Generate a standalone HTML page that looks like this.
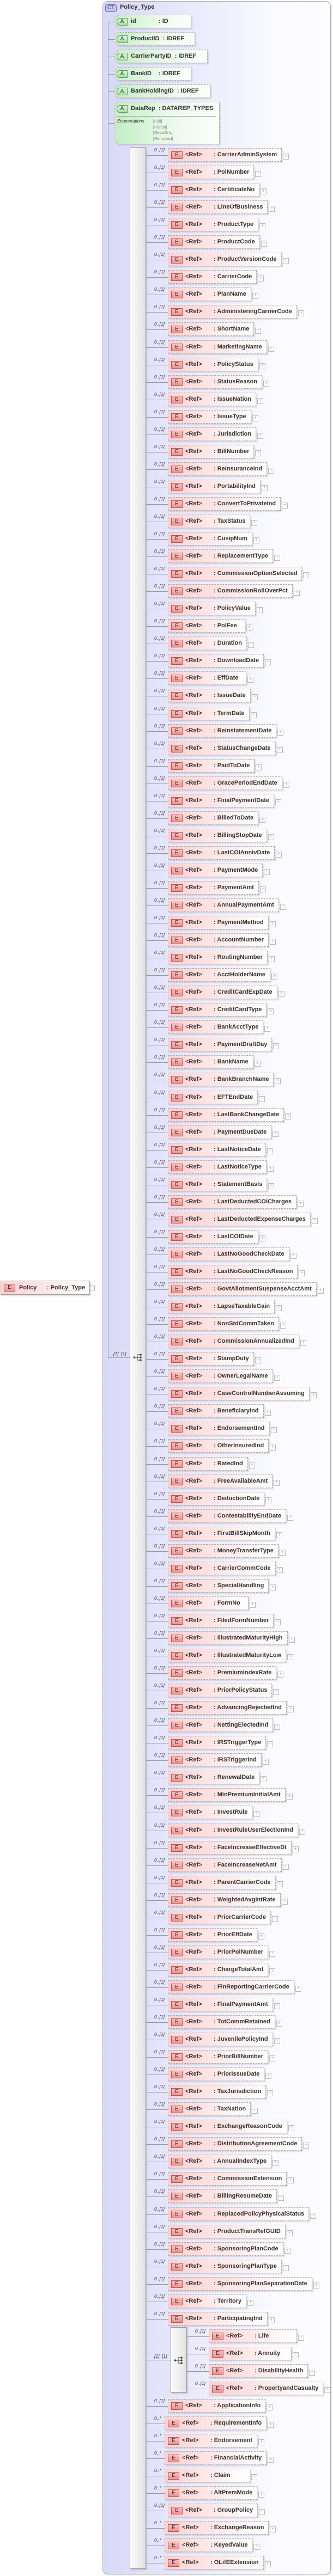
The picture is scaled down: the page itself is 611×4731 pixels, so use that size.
<!DOCTYPE html>
<html><head><meta charset="utf-8">
<style>
*{margin:0;padding:0;box-sizing:border-box}
html,body{width:611px;height:4731px;background:#fff;overflow:hidden;position:relative;font-family:"Liberation Sans",Arial,sans-serif}
.ct{position:absolute;left:188px;top:2px;width:419px;height:4726px;border:1px solid #b0b0b8;border-radius:10px;background:linear-gradient(to right,#d8d8f8 0%,#e8e8fb 35%,#fafaff 75%,#fdfdff 100%);box-shadow:1px 1px 2px rgba(0,0,0,.2)}
.ctb{position:absolute;left:193px;top:8px;width:21px;height:14px;border:1px solid #6a6ab8;border-radius:3px;background:#c8c8f0;font-size:10px;line-height:12px;text-align:center;color:#333}
.ctt{position:absolute;left:220px;top:7px;font-size:11px;font-weight:bold;color:#333}
.vl{position:absolute;background:#999;width:1px}
.hl{position:absolute;background:#999;height:1px}
.a{position:absolute;left:210px;height:25px;border:1px dashed #aaa;border-radius:10px 0 0 10px;background:linear-gradient(to right,#c4eec4,#eefaee 60%,#fafffa);box-shadow:2px 2px 2px rgba(0,0,0,.12);font-size:11px;font-weight:bold;color:#333;line-height:23px;padding-left:29px;white-space:nowrap}
.a .A{position:absolute;left:3px;top:5px;width:20px;height:14px;border:1px solid #5a9a5a;border-radius:6px 0 0 6px;background:linear-gradient(#d8f4d8,#a8dca8);font-size:10px;line-height:12px;text-align:center;font-weight:normal}
.a .nm{display:inline-block;min-width:51px}
.enh{position:absolute;left:3px;right:6px;top:25px;height:1px;background:#999}
.en1{position:absolute;left:4px;top:30px;font-size:8px;font-style:italic;font-weight:normal;line-height:10px;color:#333}
.en2{position:absolute;left:70px;top:30px;font-size:7.5px;font-weight:normal;line-height:10.5px;color:#888}
.seq{position:absolute;left:238px;top:270px;width:30px;height:4448px;border:1px solid #999;background:linear-gradient(to right,#fbfbfb,#e2e2e2);box-shadow:2px 2px 2px rgba(0,0,0,.15)}
.ico{position:absolute;width:18px;height:16px}
.lb{position:absolute;font-size:8.5px;font-style:italic;color:#333;white-space:nowrap}
.list{position:absolute;left:267px;top:272px;width:344px}
.r{position:relative;height:32.05px}
.r::before{content:"";position:absolute;left:0;top:13px;width:41px;height:1px;background:#999}
.m{position:absolute;left:16px;top:-2px;font-size:8.5px;font-style:italic;color:#333}
.b{position:absolute;left:41px;top:0;height:25px;border:1px dashed #aaa;background:linear-gradient(to right,#ffd0d0,#ffe6e6 45%,#fff8f8 80%,#fff);box-shadow:2px 2px 2px rgba(0,0,0,.13);font-size:11px;font-weight:bold;color:#333;line-height:23px;padding-left:83px;padding-right:8px;white-space:nowrap}
.s .b{left:35px}
.s::before{width:35px}
.b::after{content:"+";position:absolute;right:-14px;top:9px;width:9px;height:9px;border:1px solid #bbb;background:#fff;font-size:9px;line-height:7px;text-align:center;color:#aaa;font-weight:normal}
.E{position:absolute;left:5px;top:5px;width:21px;height:14px;border:1px solid #b05858;background:linear-gradient(#f8c0c0,#f09090);font-size:10px;line-height:12px;text-align:center;font-weight:normal;color:#333}
.f{position:absolute;left:31px;top:0}
.c{position:relative;height:128.2px}
.c::before{content:"";position:absolute;left:0;top:56px;width:46px;height:1px;background:#999}
.cb{position:absolute;left:46px;top:-4px;width:30px;height:120px;border:1px solid #999;background:linear-gradient(to right,#fbfbfb,#e2e2e2);box-shadow:2px 2px 2px rgba(0,0,0,.15)}
.cl{position:absolute;left:75px;top:0;width:260px}
</style></head><body>

<!-- Policy element -->
<div style="position:absolute;left:1px;top:2352px;width:164px;height:26px;border:1px solid #a0a0a0;background:linear-gradient(to right,#ffd0d0,#ffeaea 60%,#fff);box-shadow:2px 2px 2px rgba(0,0,0,.15);font-size:11px;font-weight:bold;color:#333;line-height:24px;white-space:nowrap">
<span style="position:absolute;left:5px;top:5px;width:21px;height:14px;border:1px solid #b05858;background:linear-gradient(#f8c0c0,#f09090);font-size:10px;line-height:12px;text-align:center;font-weight:normal">E</span>
<span style="position:absolute;left:33px">Policy</span><span style="position:absolute;left:84px">: Policy_Type</span></div>
<div style="position:absolute;left:165px;top:2361px;width:9px;height:9px;border:1px solid #aaa;background:#fff"><div style="position:absolute;left:1px;top:3px;width:5px;height:1px;background:#888"></div></div>
<div class="hl" style="left:174px;top:2365px;width:24px"></div>

<div class="ct"></div>
<div class="ctb">CT</div>
<div class="ctt">Policy_Type</div>

<div class="vl" style="left:198px;top:40px;height:2454px"></div>
<div class="hl" style="left:198px;top:40px;width:12px"></div>
<div class="hl" style="left:198px;top:72px;width:12px"></div>
<div class="hl" style="left:198px;top:104px;width:12px"></div>
<div class="hl" style="left:198px;top:136px;width:12px"></div>
<div class="hl" style="left:198px;top:168px;width:12px"></div>
<div class="hl" style="left:198px;top:226px;width:12px"></div>

<div class="a" style="top:27px;width:141px"><span class="A">A</span><span class="nm">id</span>: ID</div>
<div class="a" style="top:59px;width:148px"><span class="A">A</span>ProductID&nbsp; : IDREF</div>
<div class="a" style="top:91px;width:171px"><span class="A">A</span>CarrierPartyID&nbsp; : IDREF</div>
<div class="a" style="top:123px;width:141px"><span class="A">A</span><span class="nm">BankID</span>: IDREF</div>
<div class="a" style="top:155px;width:176px"><span class="A">A</span>BankHoldingID&nbsp; : IDREF</div>
<div class="a" style="top:187px;width:193px;height:78px"><span class="A">A</span>DataRep&nbsp; : DATAREP_TYPES
<div class="enh"></div><div class="en1">Enumerations</div><div class="en2">[Full]<br>[Partial]<br>[ReadOnly]<br>[Removed]</div></div>

<!-- main sequence -->
<div class="hl" style="left:198px;top:2493px;width:40px"></div>
<div class="lb" style="left:208px;top:2481px">[1]..[1]</div>
<div class="seq"></div>
<svg class="ico" style="left:244px;top:2485px" viewBox="0 0 18 16"><circle cx="2.5" cy="8" r="1.8" fill="#444"/><path d="M3 8H8M8 3V13M8 3H14M8 8H14M8 13H14" stroke="#444" fill="none"/><circle cx="14" cy="3" r="1.8" fill="#444"/><circle cx="14" cy="8" r="1.8" fill="#444"/><circle cx="14" cy="13" r="1.8" fill="#444"/></svg>

<div class="list">
<div class="r"><div class="m">0..[1]</div><div class="b"><span class="E">E</span><span class="f">&lt;Ref&gt;</span>: CarrierAdminSystem</div></div>
<div class="r"><div class="m">0..[1]</div><div class="b"><span class="E">E</span><span class="f">&lt;Ref&gt;</span>: PolNumber</div></div>
<div class="r"><div class="m">0..[1]</div><div class="b"><span class="E">E</span><span class="f">&lt;Ref&gt;</span>: CertificateNo</div></div>
<div class="r"><div class="m">0..[1]</div><div class="b"><span class="E">E</span><span class="f">&lt;Ref&gt;</span>: LineOfBusiness</div></div>
<div class="r"><div class="m">0..[1]</div><div class="b"><span class="E">E</span><span class="f">&lt;Ref&gt;</span>: ProductType</div></div>
<div class="r"><div class="m">0..[1]</div><div class="b"><span class="E">E</span><span class="f">&lt;Ref&gt;</span>: ProductCode</div></div>
<div class="r"><div class="m">0..[1]</div><div class="b"><span class="E">E</span><span class="f">&lt;Ref&gt;</span>: ProductVersionCode</div></div>
<div class="r"><div class="m">0..[1]</div><div class="b"><span class="E">E</span><span class="f">&lt;Ref&gt;</span>: CarrierCode</div></div>
<div class="r"><div class="m">0..[1]</div><div class="b"><span class="E">E</span><span class="f">&lt;Ref&gt;</span>: PlanName</div></div>
<div class="r"><div class="m">0..[1]</div><div class="b"><span class="E">E</span><span class="f">&lt;Ref&gt;</span>: AdministeringCarrierCode</div></div>
<div class="r"><div class="m">0..[1]</div><div class="b"><span class="E">E</span><span class="f">&lt;Ref&gt;</span>: ShortName</div></div>
<div class="r"><div class="m">0..[1]</div><div class="b"><span class="E">E</span><span class="f">&lt;Ref&gt;</span>: MarketingName</div></div>
<div class="r"><div class="m">0..[1]</div><div class="b"><span class="E">E</span><span class="f">&lt;Ref&gt;</span>: PolicyStatus</div></div>
<div class="r"><div class="m">0..[1]</div><div class="b"><span class="E">E</span><span class="f">&lt;Ref&gt;</span>: StatusReason</div></div>
<div class="r"><div class="m">0..[1]</div><div class="b"><span class="E">E</span><span class="f">&lt;Ref&gt;</span>: IssueNation</div></div>
<div class="r"><div class="m">0..[1]</div><div class="b"><span class="E">E</span><span class="f">&lt;Ref&gt;</span>: IssueType</div></div>
<div class="r"><div class="m">0..[1]</div><div class="b"><span class="E">E</span><span class="f">&lt;Ref&gt;</span>: Jurisdiction</div></div>
<div class="r"><div class="m">0..[1]</div><div class="b"><span class="E">E</span><span class="f">&lt;Ref&gt;</span>: BillNumber</div></div>
<div class="r"><div class="m">0..[1]</div><div class="b"><span class="E">E</span><span class="f">&lt;Ref&gt;</span>: ReinsuranceInd</div></div>
<div class="r"><div class="m">0..[1]</div><div class="b"><span class="E">E</span><span class="f">&lt;Ref&gt;</span>: PortabilityInd</div></div>
<div class="r"><div class="m">0..[1]</div><div class="b"><span class="E">E</span><span class="f">&lt;Ref&gt;</span>: ConvertToPrivateInd</div></div>
<div class="r"><div class="m">0..[1]</div><div class="b"><span class="E">E</span><span class="f">&lt;Ref&gt;</span>: TaxStatus</div></div>
<div class="r"><div class="m">0..[1]</div><div class="b"><span class="E">E</span><span class="f">&lt;Ref&gt;</span>: CusipNum</div></div>
<div class="r"><div class="m">0..[1]</div><div class="b"><span class="E">E</span><span class="f">&lt;Ref&gt;</span>: ReplacementType</div></div>
<div class="r"><div class="m">0..[1]</div><div class="b"><span class="E">E</span><span class="f">&lt;Ref&gt;</span>: CommissionOptionSelected</div></div>
<div class="r"><div class="m">0..[1]</div><div class="b"><span class="E">E</span><span class="f">&lt;Ref&gt;</span>: CommissionRollOverPct</div></div>
<div class="r"><div class="m">0..[1]</div><div class="b"><span class="E">E</span><span class="f">&lt;Ref&gt;</span>: PolicyValue</div></div>
<div class="r"><div class="m">0..[1]</div><div class="b"><span class="E">E</span><span class="f">&lt;Ref&gt;</span>: PolFee&nbsp;&nbsp;</div></div>
<div class="r"><div class="m">0..[1]</div><div class="b"><span class="E">E</span><span class="f">&lt;Ref&gt;</span>: Duration</div></div>
<div class="r"><div class="m">0..[1]</div><div class="b"><span class="E">E</span><span class="f">&lt;Ref&gt;</span>: DownloadDate</div></div>
<div class="r"><div class="m">0..[1]</div><div class="b"><span class="E">E</span><span class="f">&lt;Ref&gt;</span>: EffDate&nbsp;&nbsp;</div></div>
<div class="r"><div class="m">0..[1]</div><div class="b"><span class="E">E</span><span class="f">&lt;Ref&gt;</span>: IssueDate</div></div>
<div class="r"><div class="m">0..[1]</div><div class="b"><span class="E">E</span><span class="f">&lt;Ref&gt;</span>: TermDate</div></div>
<div class="r"><div class="m">0..[1]</div><div class="b"><span class="E">E</span><span class="f">&lt;Ref&gt;</span>: ReinstatementDate</div></div>
<div class="r"><div class="m">0..[1]</div><div class="b"><span class="E">E</span><span class="f">&lt;Ref&gt;</span>: StatusChangeDate</div></div>
<div class="r"><div class="m">0..[1]</div><div class="b"><span class="E">E</span><span class="f">&lt;Ref&gt;</span>: PaidToDate</div></div>
<div class="r"><div class="m">0..[1]</div><div class="b"><span class="E">E</span><span class="f">&lt;Ref&gt;</span>: GracePeriodEndDate</div></div>
<div class="r"><div class="m">0..[1]</div><div class="b"><span class="E">E</span><span class="f">&lt;Ref&gt;</span>: FinalPaymentDate</div></div>
<div class="r"><div class="m">0..[1]</div><div class="b"><span class="E">E</span><span class="f">&lt;Ref&gt;</span>: BilledToDate</div></div>
<div class="r"><div class="m">0..[1]</div><div class="b"><span class="E">E</span><span class="f">&lt;Ref&gt;</span>: BillingStopDate</div></div>
<div class="r"><div class="m">0..[1]</div><div class="b"><span class="E">E</span><span class="f">&lt;Ref&gt;</span>: LastCOIAnnivDate</div></div>
<div class="r"><div class="m">0..[1]</div><div class="b"><span class="E">E</span><span class="f">&lt;Ref&gt;</span>: PaymentMode</div></div>
<div class="r"><div class="m">0..[1]</div><div class="b"><span class="E">E</span><span class="f">&lt;Ref&gt;</span>: PaymentAmt</div></div>
<div class="r"><div class="m">0..[1]</div><div class="b"><span class="E">E</span><span class="f">&lt;Ref&gt;</span>: AnnualPaymentAmt</div></div>
<div class="r"><div class="m">0..[1]</div><div class="b"><span class="E">E</span><span class="f">&lt;Ref&gt;</span>: PaymentMethod</div></div>
<div class="r"><div class="m">0..[1]</div><div class="b"><span class="E">E</span><span class="f">&lt;Ref&gt;</span>: AccountNumber</div></div>
<div class="r"><div class="m">0..[1]</div><div class="b"><span class="E">E</span><span class="f">&lt;Ref&gt;</span>: RoutingNumber</div></div>
<div class="r"><div class="m">0..[1]</div><div class="b"><span class="E">E</span><span class="f">&lt;Ref&gt;</span>: AcctHolderName</div></div>
<div class="r"><div class="m">0..[1]</div><div class="b"><span class="E">E</span><span class="f">&lt;Ref&gt;</span>: CreditCardExpDate</div></div>
<div class="r"><div class="m">0..[1]</div><div class="b"><span class="E">E</span><span class="f">&lt;Ref&gt;</span>: CreditCardType</div></div>
<div class="r"><div class="m">0..[1]</div><div class="b"><span class="E">E</span><span class="f">&lt;Ref&gt;</span>: BankAcctType</div></div>
<div class="r"><div class="m">0..[1]</div><div class="b"><span class="E">E</span><span class="f">&lt;Ref&gt;</span>: PaymentDraftDay</div></div>
<div class="r"><div class="m">0..[1]</div><div class="b"><span class="E">E</span><span class="f">&lt;Ref&gt;</span>: BankName</div></div>
<div class="r"><div class="m">0..[1]</div><div class="b"><span class="E">E</span><span class="f">&lt;Ref&gt;</span>: BankBranchName</div></div>
<div class="r"><div class="m">0..[1]</div><div class="b"><span class="E">E</span><span class="f">&lt;Ref&gt;</span>: EFTEndDate</div></div>
<div class="r"><div class="m">0..[1]</div><div class="b"><span class="E">E</span><span class="f">&lt;Ref&gt;</span>: LastBankChangeDate</div></div>
<div class="r"><div class="m">0..[1]</div><div class="b"><span class="E">E</span><span class="f">&lt;Ref&gt;</span>: PaymentDueDate</div></div>
<div class="r"><div class="m">0..[1]</div><div class="b"><span class="E">E</span><span class="f">&lt;Ref&gt;</span>: LastNoticeDate</div></div>
<div class="r"><div class="m">0..[1]</div><div class="b"><span class="E">E</span><span class="f">&lt;Ref&gt;</span>: LastNoticeType</div></div>
<div class="r"><div class="m">0..[1]</div><div class="b"><span class="E">E</span><span class="f">&lt;Ref&gt;</span>: StatementBasis</div></div>
<div class="r"><div class="m">0..[1]</div><div class="b"><span class="E">E</span><span class="f">&lt;Ref&gt;</span>: LastDeductedCOICharges</div></div>
<div class="r"><div class="m">0..[1]</div><div class="b"><span class="E">E</span><span class="f">&lt;Ref&gt;</span>: LastDeductedExpenseCharges</div></div>
<div class="r"><div class="m">0..[1]</div><div class="b"><span class="E">E</span><span class="f">&lt;Ref&gt;</span>: LastCOIDate</div></div>
<div class="r"><div class="m">0..[1]</div><div class="b"><span class="E">E</span><span class="f">&lt;Ref&gt;</span>: LastNoGoodCheckDate</div></div>
<div class="r"><div class="m">0..[1]</div><div class="b"><span class="E">E</span><span class="f">&lt;Ref&gt;</span>: LastNoGoodCheckReason</div></div>
<div class="r"><div class="m">0..[1]</div><div class="b"><span class="E">E</span><span class="f">&lt;Ref&gt;</span>: GovtAllotmentSuspenseAcctAmt</div></div>
<div class="r"><div class="m">0..[1]</div><div class="b"><span class="E">E</span><span class="f">&lt;Ref&gt;</span>: LapseTaxableGain</div></div>
<div class="r"><div class="m">0..[1]</div><div class="b"><span class="E">E</span><span class="f">&lt;Ref&gt;</span>: NonStdCommTaken</div></div>
<div class="r"><div class="m">0..[1]</div><div class="b"><span class="E">E</span><span class="f">&lt;Ref&gt;</span>: CommissionAnnualizedInd</div></div>
<div class="r"><div class="m">0..[1]</div><div class="b"><span class="E">E</span><span class="f">&lt;Ref&gt;</span>: StampDuty</div></div>
<div class="r"><div class="m">0..[1]</div><div class="b"><span class="E">E</span><span class="f">&lt;Ref&gt;</span>: OwnerLegalName</div></div>
<div class="r"><div class="m">0..[1]</div><div class="b"><span class="E">E</span><span class="f">&lt;Ref&gt;</span>: CaseControlNumberAssuming</div></div>
<div class="r"><div class="m">0..[1]</div><div class="b"><span class="E">E</span><span class="f">&lt;Ref&gt;</span>: BeneficiaryInd</div></div>
<div class="r"><div class="m">0..[1]</div><div class="b"><span class="E">E</span><span class="f">&lt;Ref&gt;</span>: EndorsementInd</div></div>
<div class="r"><div class="m">0..[1]</div><div class="b"><span class="E">E</span><span class="f">&lt;Ref&gt;</span>: OtherInsuredInd</div></div>
<div class="r"><div class="m">0..[1]</div><div class="b"><span class="E">E</span><span class="f">&lt;Ref&gt;</span>: RatedInd</div></div>
<div class="r"><div class="m">0..[1]</div><div class="b"><span class="E">E</span><span class="f">&lt;Ref&gt;</span>: FreeAvailableAmt</div></div>
<div class="r"><div class="m">0..[1]</div><div class="b"><span class="E">E</span><span class="f">&lt;Ref&gt;</span>: DeductionDate</div></div>
<div class="r"><div class="m">0..[1]</div><div class="b"><span class="E">E</span><span class="f">&lt;Ref&gt;</span>: ContestabilityEndDate</div></div>
<div class="r"><div class="m">0..[1]</div><div class="b"><span class="E">E</span><span class="f">&lt;Ref&gt;</span>: FirstBillSkipMonth</div></div>
<div class="r"><div class="m">0..[1]</div><div class="b"><span class="E">E</span><span class="f">&lt;Ref&gt;</span>: MoneyTransferType</div></div>
<div class="r"><div class="m">0..[1]</div><div class="b"><span class="E">E</span><span class="f">&lt;Ref&gt;</span>: CarrierCommCode</div></div>
<div class="r"><div class="m">0..[1]</div><div class="b"><span class="E">E</span><span class="f">&lt;Ref&gt;</span>: SpecialHandling</div></div>
<div class="r"><div class="m">0..[1]</div><div class="b"><span class="E">E</span><span class="f">&lt;Ref&gt;</span>: FormNo&nbsp;&nbsp;</div></div>
<div class="r"><div class="m">0..[1]</div><div class="b"><span class="E">E</span><span class="f">&lt;Ref&gt;</span>: FiledFormNumber</div></div>
<div class="r"><div class="m">0..[1]</div><div class="b"><span class="E">E</span><span class="f">&lt;Ref&gt;</span>: IllustratedMaturityHigh</div></div>
<div class="r"><div class="m">0..[1]</div><div class="b"><span class="E">E</span><span class="f">&lt;Ref&gt;</span>: IllustratedMaturityLow</div></div>
<div class="r"><div class="m">0..[1]</div><div class="b"><span class="E">E</span><span class="f">&lt;Ref&gt;</span>: PremiumIndexRate</div></div>
<div class="r"><div class="m">0..[1]</div><div class="b"><span class="E">E</span><span class="f">&lt;Ref&gt;</span>: PriorPolicyStatus</div></div>
<div class="r"><div class="m">0..[1]</div><div class="b"><span class="E">E</span><span class="f">&lt;Ref&gt;</span>: AdvancingRejectedInd</div></div>
<div class="r"><div class="m">0..[1]</div><div class="b"><span class="E">E</span><span class="f">&lt;Ref&gt;</span>: NettingElectedInd</div></div>
<div class="r"><div class="m">0..[1]</div><div class="b"><span class="E">E</span><span class="f">&lt;Ref&gt;</span>: IRSTriggerType</div></div>
<div class="r"><div class="m">0..[1]</div><div class="b"><span class="E">E</span><span class="f">&lt;Ref&gt;</span>: IRSTriggerInd</div></div>
<div class="r"><div class="m">0..[1]</div><div class="b"><span class="E">E</span><span class="f">&lt;Ref&gt;</span>: RenewalDate</div></div>
<div class="r"><div class="m">0..[1]</div><div class="b"><span class="E">E</span><span class="f">&lt;Ref&gt;</span>: MinPremiumInitialAmt</div></div>
<div class="r"><div class="m">0..[1]</div><div class="b"><span class="E">E</span><span class="f">&lt;Ref&gt;</span>: InvestRule</div></div>
<div class="r"><div class="m">0..[1]</div><div class="b"><span class="E">E</span><span class="f">&lt;Ref&gt;</span>: InvestRuleUserElectionInd</div></div>
<div class="r"><div class="m">0..[1]</div><div class="b"><span class="E">E</span><span class="f">&lt;Ref&gt;</span>: FaceIncreaseEffectiveDt</div></div>
<div class="r"><div class="m">0..[1]</div><div class="b"><span class="E">E</span><span class="f">&lt;Ref&gt;</span>: FaceIncreaseNetAmt</div></div>
<div class="r"><div class="m">0..[1]</div><div class="b"><span class="E">E</span><span class="f">&lt;Ref&gt;</span>: ParentCarrierCode</div></div>
<div class="r"><div class="m">0..[1]</div><div class="b"><span class="E">E</span><span class="f">&lt;Ref&gt;</span>: WeightedAvgIntRate</div></div>
<div class="r"><div class="m">0..[1]</div><div class="b"><span class="E">E</span><span class="f">&lt;Ref&gt;</span>: PriorCarrierCode</div></div>
<div class="r"><div class="m">0..[1]</div><div class="b"><span class="E">E</span><span class="f">&lt;Ref&gt;</span>: PriorEffDate</div></div>
<div class="r"><div class="m">0..[1]</div><div class="b"><span class="E">E</span><span class="f">&lt;Ref&gt;</span>: PriorPolNumber</div></div>
<div class="r"><div class="m">0..[1]</div><div class="b"><span class="E">E</span><span class="f">&lt;Ref&gt;</span>: ChargeTotalAmt</div></div>
<div class="r"><div class="m">0..[1]</div><div class="b"><span class="E">E</span><span class="f">&lt;Ref&gt;</span>: FinReportingCarrierCode</div></div>
<div class="r"><div class="m">0..[1]</div><div class="b"><span class="E">E</span><span class="f">&lt;Ref&gt;</span>: FinalPaymentAmt</div></div>
<div class="r"><div class="m">0..[1]</div><div class="b"><span class="E">E</span><span class="f">&lt;Ref&gt;</span>: TotCommRetained</div></div>
<div class="r"><div class="m">0..[1]</div><div class="b"><span class="E">E</span><span class="f">&lt;Ref&gt;</span>: JuvenilePolicyInd</div></div>
<div class="r"><div class="m">0..[1]</div><div class="b"><span class="E">E</span><span class="f">&lt;Ref&gt;</span>: PriorBillNumber</div></div>
<div class="r"><div class="m">0..[1]</div><div class="b"><span class="E">E</span><span class="f">&lt;Ref&gt;</span>: PriorIssueDate</div></div>
<div class="r"><div class="m">0..[1]</div><div class="b"><span class="E">E</span><span class="f">&lt;Ref&gt;</span>: TaxJurisdiction</div></div>
<div class="r"><div class="m">0..[1]</div><div class="b"><span class="E">E</span><span class="f">&lt;Ref&gt;</span>: TaxNation</div></div>
<div class="r"><div class="m">0..[1]</div><div class="b"><span class="E">E</span><span class="f">&lt;Ref&gt;</span>: ExchangeReasonCode</div></div>
<div class="r"><div class="m">0..[1]</div><div class="b"><span class="E">E</span><span class="f">&lt;Ref&gt;</span>: DistributionAgreementCode</div></div>
<div class="r"><div class="m">0..[1]</div><div class="b"><span class="E">E</span><span class="f">&lt;Ref&gt;</span>: AnnualIndexType</div></div>
<div class="r"><div class="m">0..[1]</div><div class="b"><span class="E">E</span><span class="f">&lt;Ref&gt;</span>: CommissionExtension</div></div>
<div class="r"><div class="m">0..[1]</div><div class="b"><span class="E">E</span><span class="f">&lt;Ref&gt;</span>: BillingResumeDate</div></div>
<div class="r"><div class="m">0..[1]</div><div class="b"><span class="E">E</span><span class="f">&lt;Ref&gt;</span>: ReplacedPolicyPhysicalStatus</div></div>
<div class="r"><div class="m">0..[1]</div><div class="b"><span class="E">E</span><span class="f">&lt;Ref&gt;</span>: ProductTransRefGUID</div></div>
<div class="r"><div class="m">0..[1]</div><div class="b"><span class="E">E</span><span class="f">&lt;Ref&gt;</span>: SponsoringPlanCode</div></div>
<div class="r"><div class="m">0..[1]</div><div class="b"><span class="E">E</span><span class="f">&lt;Ref&gt;</span>: SponsoringPlanType</div></div>
<div class="r"><div class="m">0..[1]</div><div class="b"><span class="E">E</span><span class="f">&lt;Ref&gt;</span>: SponsoringPlanSeparationDate</div></div>
<div class="r"><div class="m">0..[1]</div><div class="b"><span class="E">E</span><span class="f">&lt;Ref&gt;</span>: Territory</div></div>
<div class="r"><div class="m">0..[1]</div><div class="b"><span class="E">E</span><span class="f">&lt;Ref&gt;</span>: ParticipatingInd</div></div>
<div class="c"><div class="m" style="top:44px">[1]..[1]</div><div class="cb"></div>
<svg class="ico" style="left:52px;top:49px" viewBox="0 0 18 16"><circle cx="2.5" cy="8" r="1.8" fill="#444"/><path d="M3 8H8M8 3V13M8 3H14M8 8H14M8 13H14" stroke="#444" fill="none"/><circle cx="14" cy="3" r="1.8" fill="#444"/><circle cx="14" cy="8" r="1.8" fill="#444"/><circle cx="14" cy="13" r="1.8" fill="#444"/></svg>
<div class="cl">
<div class="r"><div class="m">0..[1]</div><div class="b"><span class="E">E</span><span class="f">&lt;Ref&gt;</span>: Life&nbsp;&nbsp;&nbsp;&nbsp;&nbsp;&nbsp;&nbsp;&nbsp;&nbsp;&nbsp;&nbsp;&nbsp;&nbsp;&nbsp;</div></div>
<div class="r"><div class="m">0..[1]</div><div class="b"><span class="E">E</span><span class="f">&lt;Ref&gt;</span>: Annuity&nbsp;&nbsp;&nbsp;&nbsp;</div></div>
<div class="r"><div class="m">0..[1]</div><div class="b"><span class="E">E</span><span class="f">&lt;Ref&gt;</span>: DisabilityHealth</div></div>
<div class="r"><div class="m">0..[1]</div><div class="b"><span class="E">E</span><span class="f">&lt;Ref&gt;</span>: PropertyandCasualty</div></div>
</div></div>
<div class="r"><div class="m">0..[1]</div><div class="b"><span class="E">E</span><span class="f">&lt;Ref&gt;</span>: ApplicationInfo</div></div>
<div class="r s"><div class="m">0..*</div><div class="b"><span class="E">E</span><span class="f">&lt;Ref&gt;</span>: RequirementInfo</div></div>
<div class="r s"><div class="m">0..*</div><div class="b"><span class="E">E</span><span class="f">&lt;Ref&gt;</span>: Endorsement</div></div>
<div class="r s"><div class="m">0..*</div><div class="b"><span class="E">E</span><span class="f">&lt;Ref&gt;</span>: FinancialActivity</div></div>
<div class="r s"><div class="m">0..*</div><div class="b"><span class="E">E</span><span class="f">&lt;Ref&gt;</span>: Claim&nbsp;&nbsp;&nbsp;&nbsp;&nbsp;&nbsp;&nbsp;&nbsp;&nbsp;</div></div>
<div class="r s"><div class="m">0..*</div><div class="b"><span class="E">E</span><span class="f">&lt;Ref&gt;</span>: AltPremMode</div></div>
<div class="r"><div class="m">0..[1]</div><div class="b"><span class="E">E</span><span class="f">&lt;Ref&gt;</span>: GroupPolicy</div></div>
<div class="r s"><div class="m">0..*</div><div class="b"><span class="E">E</span><span class="f">&lt;Ref&gt;</span>: ExchangeReason</div></div>
<div class="r s"><div class="m">0..*</div><div class="b"><span class="E">E</span><span class="f">&lt;Ref&gt;</span>: KeyedValue</div></div>
<div class="r s"><div class="m">0..*</div><div class="b"><span class="E">E</span><span class="f">&lt;Ref&gt;</span>: OLifEExtension</div></div>
</div>
</body></html>
